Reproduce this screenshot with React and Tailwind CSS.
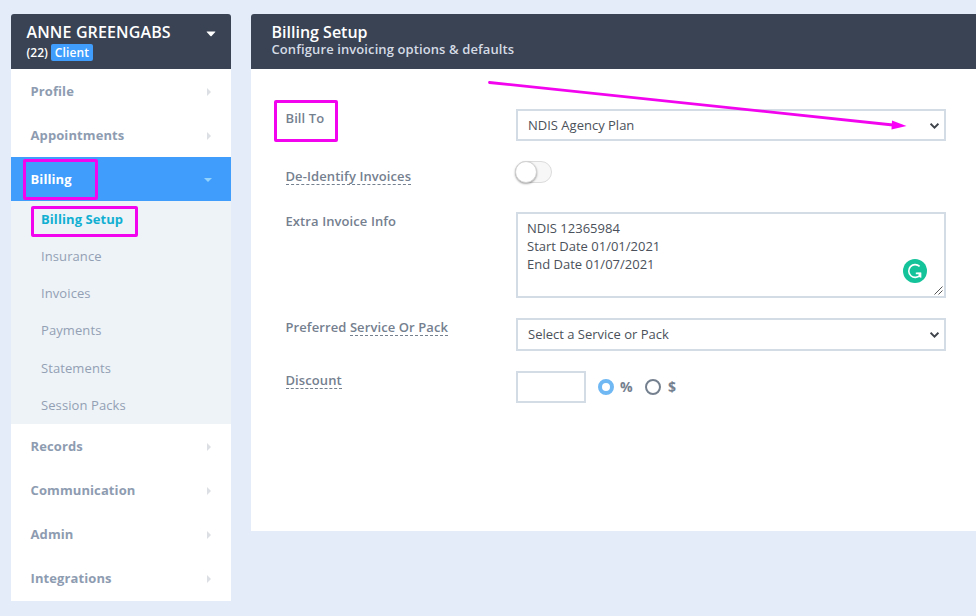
import { useState } from 'react'

// ── Data ──────────────────────────────────────────────────────────────────────

const MENU = [
  { label: 'Profile' },
  { label: 'Appointments' },
  {
    label: 'Billing',
    children: ['Billing Setup', 'Insurance', 'Invoices', 'Payments', 'Statements', 'Session Packs'],
  },
  { label: 'Records' },
  { label: 'Communication' },
  { label: 'Admin' },
  { label: 'Integrations' },
]

const NOTES = 'NDIS 12365984\nStart Date 01/01/2021\nEnd Date 01/07/2021'

// ── Sidebar ───────────────────────────────────────────────────────────────────

function Highlight({ className }) {
  return (
    <span
      className={`pointer-events-none absolute rounded-[2px] border-3 border-[#f205ee] ${className}`}
    />
  )
}

function SubMenu({ items }) {
  return (
    <ul className="flex h-[223px] flex-col bg-[#edf3f7] pt-[0.3px]">
      {items.map((item, i) => (
        <li key={item} className="relative flex flex-1 items-center pl-[30px]">
          <a
            className={
              i === 0
                ? 'text-[13px] font-bold tracking-[0.08px] text-[#12afd2]'
                : 'text-[13px] tracking-[0.09px] text-[#93a0b4]'
            }
          >
            {item}
          </a>
          {i === 0 && <Highlight className="left-5 top-[5px] h-[31px] w-[107px]" />}
        </li>
      ))}
    </ul>
  )
}

function Sidebar() {
  const [open, setOpen] = useState('Billing')

  return (
    <aside className="w-[220px] shrink-0 self-start">
      <header className="flex h-[55px] justify-between rounded-t-[3px] bg-[#394354] pl-[15.5px] pr-[15px] pt-2 text-white">
        <div>
          <h2 className="text-base font-semibold leading-[20px] tracking-[0.13px]">ANNE GREENGABS</h2>
          <p className="mt-[2px] flex items-center text-xs font-semibold leading-[17px]">
            (22)
            <span className="ml-[3px] rounded-[2px] bg-[#409dfc] px-1 tracking-[0.1px]">Client</span>
          </p>
        </div>
        <svg className="mt-[9px] h-[6px] w-[10px]" viewBox="0 0 10 6" fill="currentColor">
          <path d="M1 0.5h8q.7 0 .3.6L5.6 4.9q-.6.6-1.2 0L.7 1.1Q.3.5 1 .5z" />
        </svg>
      </header>

      <nav className="bg-white pb-px">
        {MENU.map(({ label, children }) => {
          const active = open === label
          return (
            <div key={label}>
              <button
                type="button"
                onClick={() => setOpen(active ? null : label)}
                className={`relative flex h-11 w-full items-center justify-between pl-[19.5px] pt-px text-[13px] font-bold tracking-[0.1px] ${
                  active ? 'bg-[#409dfc] pr-[19px] text-white' : 'pr-5 text-[#8e9cb1]'
                }`}
              >
                {label}
                {active ? (
                  <svg className="h-1 w-2 text-[#92d3fd]" viewBox="0 0 8 4" fill="currentColor">
                    <path d="M0 0h8L4 4z" />
                  </svg>
                ) : (
                  <svg className="h-2 w-1 text-[#dcdfe4]" viewBox="0 0 4 8" fill="currentColor">
                    <path d="M0 0v8l4-4z" />
                  </svg>
                )}
                {active && <Highlight className="left-3 top-[2px] h-[41px] w-[75px]" />}
              </button>
              {active && children && <SubMenu items={children} />}
            </div>
          )
        })}
      </nav>
    </aside>
  )
}

// ── Form controls ─────────────────────────────────────────────────────────────

function Row({ label, labelClass = '', className = '', children }) {
  return (
    <div className={`flex items-start ${className}`}>
      <div className={`-ml-[0.5px] w-[230.5px] shrink-0 text-[13px] font-semibold leading-[18px] tracking-[0.09px] text-[#75808f] ${labelClass}`}>
        {label}
      </div>
      {children}
    </div>
  )
}

function Hint({ children }) {
  return (
    <span className="inline-block h-[18px] border-b border-dashed border-[#75808f] leading-[18px]">
      {children}
    </span>
  )
}

function Select({ value, className = '' }) {
  return (
    <div
      className={`flex w-[430px] items-center justify-between border-2 border-[#d3dbe5] bg-white pl-[10px] pr-[5px] text-[13px] text-[#4b515a] ${className}`}
    >
      {value}
      <svg className="h-[6px] w-[9px]" viewBox="0 0 9 6" fill="none" stroke="#3f444b" strokeWidth="1.9">
        <path d="M.6.7l3.9 3.9L8.4.7" />
      </svg>
    </div>
  )
}

function Toggle() {
  const [on, setOn] = useState(false)
  return (
    <button
      type="button"
      role="switch"
      aria-checked={on}
      onClick={() => setOn(!on)}
      className={`-ml-px flex h-[22px] w-[37px] rounded-full border border-[#dcdcdc] bg-[#f7f7f7] ${
        on ? 'justify-end' : 'justify-start'
      }`}
    >
      <span className="-ml-px -mt-px size-[22px] rounded-full border border-[#d2d2d2] bg-white shadow-[0_1px_2px_rgba(0,0,0,0.35)]" />
    </button>
  )
}

function Notes() {
  return (
    <div className="relative h-[86px] w-[430px] border-2 border-[#d3dbe5] bg-white">
      <div className="whitespace-pre pl-[9px] pt-[5px] text-[13px] leading-[18px] text-[#4b515a]">
        {NOTES}
      </div>
      {/* writing assistant badge */}
      <svg className="absolute right-[17px] top-[45px] size-6" viewBox="0 0 24 24" fill="none">
        <circle cx="12" cy="12" r="12" fill="#15c39a" />
        <path
          d="M16.6 7.4A6.4 6.4 0 1 0 17 16.2M12.8 14.4h4.6v4.2"
          stroke="#fff"
          strokeWidth="1.6"
        />
        <path d="M14.2 13.8h4v5.2z" fill="#fff" />
      </svg>
      {/* resize grip */}
      <svg className="absolute bottom-px right-px h-[9px] w-[9px]" viewBox="0 0 9 9" stroke="#555">
        <path d="M.5 8.5l8-8M4.5 8.5l4-4" />
      </svg>
    </div>
  )
}

function Radio({ checked, label, onClick }) {
  return (
    <button
      type="button"
      onClick={onClick}
      className="flex items-center gap-[6px] text-[14px] font-bold leading-[18px] text-[#75808f]"
    >
      <span
        className={`size-4 rounded-full bg-white ${
          checked ? 'border-4 border-[#6fb8f4]' : 'border-2 border-[#75808f]'
        }`}
      />
      <span className={checked ? 'w-[13px] text-left' : 'pl-px'}>{label}</span>
    </button>
  )
}

// ── Billing setup ─────────────────────────────────────────────────────────────

function BillingSetup() {
  const [unit, setUnit] = useState('%')

  return (
    <main className="relative flex h-[517px] min-w-0 flex-1 flex-col rounded-tl-[3px] bg-white">
      <header className="h-[55px] shrink-0 rounded-tl-[3px] bg-[#394354] pl-[20.5px] pt-2">
        <h1 className="text-base font-semibold leading-[20px] text-white">Billing Setup</h1>
        <p className="text-[13px] font-semibold leading-[15px] tracking-[0.1px] text-[#d5dbe5]">
          Configure invoicing options &amp; defaults
        </p>
      </header>

      <div className="relative pl-[35px] pt-10">
        <Highlight className="left-[23px] top-[31px] h-[42px] w-[64px]" />
        <Row label="Bill To" className="h-[52px]">
          <Select value="NDIS Agency Plan" className="h-8 pt-px" />
        </Row>
        <Row label={<Hint>De-Identify Invoices</Hint>} labelClass="pt-[6px]" className="h-[51px]">
          <Toggle />
        </Row>
        <Row label="Extra Invoice Info" className="h-[106px]">
          <Notes />
        </Row>
        <Row label={<>Preferred <Hint>Service Or Pack</Hint></>} className="h-[53px]">
          <Select value="Select a Service or Pack" className="h-[33px]" />
        </Row>
        <Row label={<Hint>Discount</Hint>}>
          <div className="flex h-8 items-center">
            <input className="mr-3 h-8 w-[70px] border-2 border-[#d3dbe5] px-2 text-[13px] outline-none" />
            <div className="flex gap-3">
              <Radio label="%" checked={unit === '%'} onClick={() => setUnit('%')} />
              <Radio label="$" checked={unit === '$'} onClick={() => setUnit('$')} />
            </div>
          </div>
        </Row>

        {/* pointer to the plan dropdown */}
        <svg
          className="pointer-events-none absolute left-[233px] top-[7px] h-[60px] w-[430px]"
          viewBox="0 0 430 60"
          fill="#fb00f8"
        >
          <path d="M5.5 6.5L409 49" stroke="#f205ee" strokeWidth="2.8" strokeLinecap="round" />
          <path d="M408 44.6l14.5 5.4-15 3.6z" />
        </svg>
      </div>
    </main>
  )
}

// ── App root ──────────────────────────────────────────────────────────────────

export default function App() {
  return (
    <div className="flex h-[616px] w-[976px] gap-5 overflow-hidden bg-[#e4ecf9] pl-[11px] pt-[14px] font-['Open_Sans',sans-serif]">
      <Sidebar />
      <BillingSetup />
    </div>
  )
}
